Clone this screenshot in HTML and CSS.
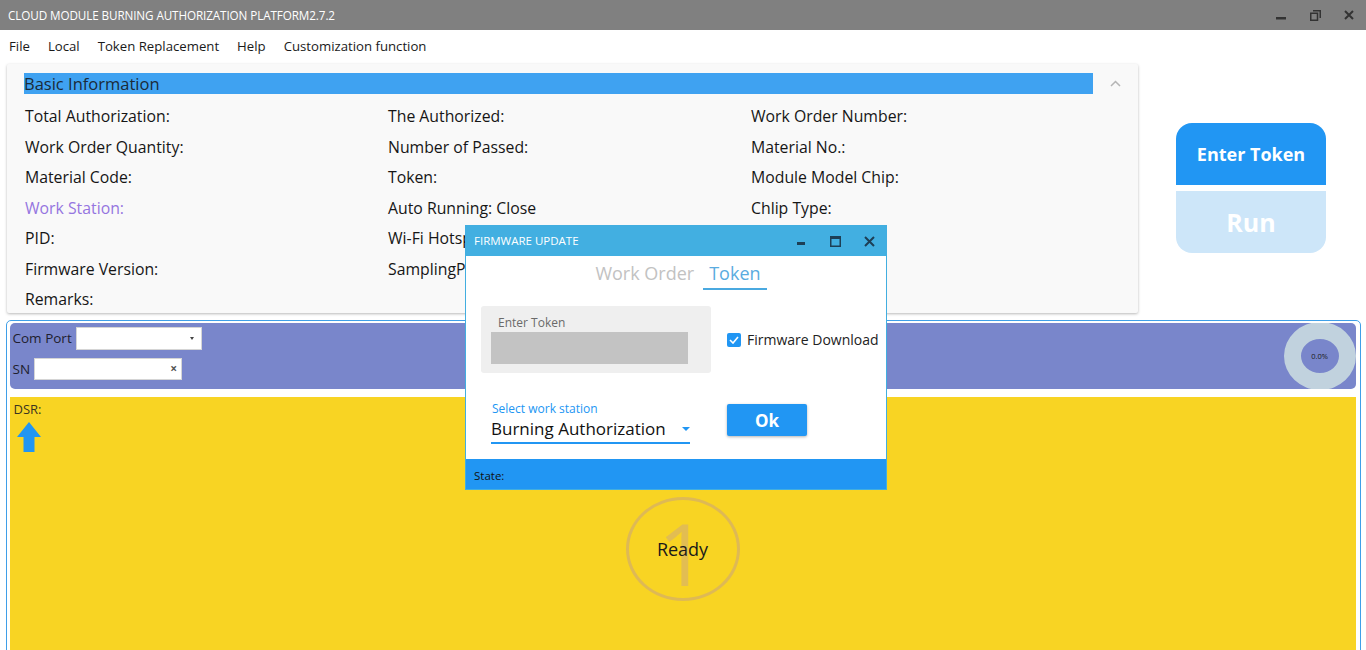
FILE: index.html
```html
<!DOCTYPE html>
<html lang="en">
<head>
<meta charset="utf-8">
<title>CLOUD MODULE BURNING AUTHORIZATION PLATFORM2.7.2</title>
<link rel="stylesheet" href="styles.css">
</head>
<body>
<header class="titlebar">
  <span class="app-title">CLOUD MODULE BURNING AUTHORIZATION PLATFORM2.7.2</span>
  <div class="win-btns">
    <span class="win-btn"><svg width="10" height="10" viewBox="0 0 10 10"><rect x="0" y="7" width="10" height="2.5" fill="#333"/></svg></span>
    <span class="win-btn"><svg width="11" height="11" viewBox="0 0 11 11"><path d="M3 .75h7.25V8M.75 3.25h6.75v7H.75z" fill="none" stroke="#333" stroke-width="1.5"/></svg></span>
    <span class="win-btn"><svg width="10" height="10" viewBox="0 0 10 10"><path d="M1 1l8 8M9 1L1 9" stroke="#333" stroke-width="2"/></svg></span>
  </div>
</header>
<nav class="menubar">
  <span class="menu-item">File</span>
  <span class="menu-item">Local</span>
  <span class="menu-item">Token Replacement</span>
  <span class="menu-item">Help</span>
  <span class="menu-item">Customization function</span>
</nav>
<main class="main">
  <div class="top">
    <section class="info-card">
      <div class="info-head">
        <span class="info-title">Basic Information</span>
        <span class="chev"><svg width="11" height="7" viewBox="0 0 11 7"><path d="M1 6l4.5-4.5L10 6" fill="none" stroke="#b5b5b5" stroke-width="1.5"/></svg></span>
      </div>
      <div class="info-grid">
        <span>Total Authorization:</span><span>The Authorized:</span><span>Work Order Number:</span>
        <span>Work Order Quantity:</span><span>Number of Passed:</span><span>Material No.:</span>
        <span>Material Code:</span><span>Token:</span><span>Module Model Chip:</span>
        <span class="accent">Work Station:</span><span>Auto Running: Close</span><span>Chlip Type:</span>
        <span>PID:</span><span>Wi-Fi Hotspot:</span><span></span>
        <span>Firmware Version:</span><span>SamplingPoint:</span><span></span>
        <span>Remarks:</span><span></span><span></span>
      </div>
    </section>
    <div class="actions">
      <button class="btn-token">Enter Token</button>
      <button class="btn-run">Run</button>
    </div>
  </div>
  <section class="station">
    <div class="port-bar">
      <div class="port-fields">
        <div class="field-row">
          <label class="field-label">Com Port</label>
          <div class="select-box"><span class="caret"></span></div>
        </div>
        <div class="field-row">
          <label class="field-label">SN</label>
          <div class="sn-box"><span class="clear">×</span></div>
        </div>
      </div>
      <div class="ring"><span class="ring-text">0.0%</span></div>
    </div>
    <div class="work-area">
      <div class="dsr">
        <span class="dsr-label">DSR:</span>
        <svg class="arrow" width="24" height="30" viewBox="0 0 24 30"><polygon points="12,0 24,15 17.5,15 17.5,30 6.5,30 6.5,15 0,15" fill="#2196f3"/></svg>
      </div>
      <div class="ready-circle">
        <span class="ready-num">1</span>
        <span class="ready-text">Ready</span>
      </div>
    </div>
  </section>
</main>

<div class="modal">
  <div class="modal-title">
    <span class="modal-name">FIRMWARE UPDATE</span>
    <div class="modal-btns">
      <span class="win-btn"><svg width="8" height="8" viewBox="0 0 8 8"><rect x="0" y="5" width="8" height="3" fill="#1d3f56"/></svg></span>
      <span class="win-btn"><svg width="11" height="11" viewBox="0 0 11 11"><path d="M.75 .75h9.5v9.5H.75z" fill="none" stroke="#1d3f56" stroke-width="1.5"/><rect x="0" y="0" width="11" height="3" fill="#1d3f56"/></svg></span>
      <span class="win-btn"><svg width="11" height="11" viewBox="0 0 11 11"><path d="M1 1l9 9M10 1L1 10" stroke="#1d3f56" stroke-width="2"/></svg></span>
    </div>
  </div>
  <div class="modal-body">
    <div class="tabs">
      <span class="tab">Work Order</span>
      <span class="tab tab-active">Token</span>
    </div>
    <div class="token-row">
      <div class="token-box">
        <span class="token-label">Enter Token</span>
        <div class="token-input"></div>
      </div>
      <label class="check">
        <span class="check-box"><svg width="10" height="8" viewBox="0 0 10 8"><path d="M1 4l3 3 5-6" fill="none" stroke="#fff" stroke-width="1.6"/></svg></span>
        <span class="check-text">Firmware Download</span>
      </label>
    </div>
    <div class="station-row">
      <div class="ws-select">
        <span class="ws-label">Select work station</span>
        <div class="ws-value"><span>Burning Authorization</span><span class="ws-caret"></span></div>
      </div>
      <button class="btn-ok">Ok</button>
    </div>
  </div>
  <div class="modal-state">State:</div>
</div>
</body>
</html>
```

FILE: styles.css
```css
html, body {
  margin: 0;
  padding: 0;
  height: 650px;
  overflow: hidden;
  background: #ffffff;
  font-family: "Open Sans", "Noto Sans", "Liberation Sans", sans-serif;
  color: #1a1a1a;
}

.titlebar {
  height: 30px;
  background: #808080;
  display: flex;
  align-items: center;
  justify-content: space-between;
}
.app-title {
  color: #ffffff;
  font-size: 11.7px;
  padding-left: 8px;
  letter-spacing: -0.1px;
}
.win-btns, .modal-btns {
  display: flex;
  height: 100%;
}
.win-btn {
  width: 34px;
  display: flex;
  align-items: center;
  justify-content: center;
}

.menubar {
  height: 32px;
  display: flex;
  align-items: center;
  font-size: 13.2px;
  padding-left: 0;
}
.menu-item {
  padding: 0 9px;
}

.main {
  display: flex;
  flex-direction: column;
}
.top {
  display: flex;
  margin-top: 2px;
}
.info-card {
  margin-left: 7px;
  width: 1131px;
  height: 249px;
  box-sizing: border-box;
  background: #f9f9f9;
  box-shadow: 0 1px 3px rgba(0,0,0,0.28);
  border-radius: 2px;
  padding: 9px 0 0 17px;
}
.info-head {
  display: flex;
  height: 21px;
}
.info-title {
  flex: 1;
  background: #3fa2f1;
  font-size: 16.5px;
  line-height: 21px;
  color: #1b2a38;
}
.chev {
  width: 45px;
  display: flex;
  align-items: center;
  justify-content: center;
}
.info-grid {
  margin-top: 7px;
  display: grid;
  grid-template-columns: 363px 363px 1fr;
  grid-auto-rows: 30.5px;
  font-size: 15.8px;
  align-items: center;
  padding-left: 1px;
  color: #161616;
}
.accent {
  color: #9575e0;
}

.actions {
  margin-left: 38px;
  padding-top: 59px;
  display: flex;
  flex-direction: column;
  gap: 6px;
}
.btn-token, .btn-run {
  width: 150px;
  height: 62px;
  border: none;
  color: #ffffff;
  font-family: inherit;
  font-weight: 700;
  padding: 0;
}
.btn-token {
  background: #2196f3;
  border-radius: 16px 16px 0 0;
  font-size: 18px;
}
.btn-run {
  background: #cde6f9;
  border-radius: 0 0 16px 16px;
  font-size: 25px;
}

.station {
  margin-top: 7px;
  margin-left: 6px;
  width: 1355px;
  box-sizing: border-box;
  border: 1.5px solid #3f9fe8;
  border-radius: 5px;
  padding: 1.5px 4.5px 0 2.5px;
}
.port-bar {
  height: 66px;
  background: #7986cb;
  border-radius: 5px;
  display: flex;
  justify-content: space-between;
  align-items: center;
  overflow: hidden;
}
.port-fields {
  display: flex;
  flex-direction: column;
  gap: 8px;
  padding-left: 3px;
  align-self: flex-start;
  padding-top: 4px;
}
.field-row {
  display: flex;
  align-items: center;
  gap: 4px;
  font-size: 13.5px;
  color: #1e1e2e;
}
.select-box {
  width: 126px;
  height: 23px;
  box-sizing: border-box;
  background: #ffffff;
  border: 1px solid #d5d5d5;
  display: flex;
  align-items: center;
  justify-content: flex-end;
  padding-right: 7px;
}
.caret {
  width: 0;
  height: 0;
  border-left: 2.5px solid transparent;
  border-right: 2.5px solid transparent;
  border-top: 3px solid #444;
}
.sn-box {
  width: 148px;
  height: 22px;
  box-sizing: border-box;
  background: #ffffff;
  border: 1px solid #d5d5d5;
  display: flex;
  align-items: center;
  justify-content: flex-end;
  padding-right: 4px;
}
.clear {
  font-size: 12px;
  color: #555;
  font-weight: 700;
}
.ring {
  width: 72px;
  height: 68px;
  box-sizing: border-box;
  border-radius: 50%;
  border: 17px solid #c1d2de;
  background: #7986cb;
  display: flex;
  align-items: center;
  justify-content: center;
}
.ring-text {
  font-size: 7.5px;
  color: #1a1a1a;
}

.work-area {
  margin-top: 8px;
  height: 304px;
  background: #f8d423;
  display: grid;
}
.dsr, .ready-circle {
  grid-area: 1 / 1;
}
.dsr {
  align-self: start;
  justify-self: start;
  display: flex;
  flex-direction: column;
  padding: 3px 0 0 4px;
}
.dsr-label {
  font-size: 13px;
  color: #3a3420;
  line-height: 18px;
}
.arrow {
  margin-top: 4px;
  margin-left: 3px;
}
.ready-circle {
  place-self: center;
  width: 114px;
  height: 104px;
  box-sizing: border-box;
  border: 3px solid #deb955;
  border-radius: 50%;
  display: grid;
  place-items: center;
}
.ready-num, .ready-text {
  grid-area: 1 / 1;
}
.ready-num {
  font-size: 86px;
  color: #e2bd52;
  line-height: 1;
  margin-top: 8px;
}
.ready-text {
  font-size: 18px;
  color: #1a1a1a;
}

/* Modal dialog overlay */
.modal {
  position: absolute;
  left: 465px;
  top: 225px;
  width: 422px;
  height: 265px;
  box-sizing: border-box;
  border: 1px solid #42aee0;
  background: #ffffff;
  display: flex;
  flex-direction: column;
}
.modal-title {
  height: 30px;
  background: #42afe1;
  display: flex;
  align-items: center;
  justify-content: space-between;
}
.modal-name {
  color: #ffffff;
  font-size: 11.5px;
  padding-left: 8px;
  padding-bottom: 2px;
}
.modal-body {
  flex: 1;
  display: flex;
  flex-direction: column;
}
.tabs {
  display: flex;
  justify-content: center;
  gap: 3px;
  padding-left: 4px;
  margin-top: 4px;
}
.tab {
  font-size: 18px;
  color: #c2c2c2;
  padding: 0 6px 2px;
  line-height: 26px;
  border-bottom: 2px solid transparent;
}
.tab-active {
  color: #5aace0;
  border-bottom-color: #4aa9e0;
}
.token-row {
  display: flex;
  align-items: center;
  margin-top: 16px;
  padding-left: 15px;
}
.token-box {
  width: 230px;
  height: 67px;
  box-sizing: border-box;
  background: #efefef;
  border-radius: 3px;
  padding: 8px 0 0 10px;
  display: flex;
  flex-direction: column;
}
.token-label {
  font-size: 12px;
  color: #6a6a6a;
  padding-left: 7px;
  line-height: 17px;
}
.token-input {
  width: 197px;
  height: 32px;
  background: #c3c3c3;
  margin-top: 1px;
}
.check {
  display: flex;
  align-items: center;
  margin-left: 16px;
  gap: 6px;
}
.check-box {
  width: 14px;
  height: 14px;
  border-radius: 2px;
  background: #2196f3;
  display: flex;
  align-items: center;
  justify-content: center;
}
.check-text {
  font-size: 14px;
  color: #222;
}
.station-row {
  display: flex;
  align-items: flex-start;
  margin-top: 28px;
  padding-left: 25px;
}
.ws-select {
  width: 199px;
  display: flex;
  flex-direction: column;
  border-bottom: 2px solid #2196f3;
}
.ws-label {
  font-size: 12px;
  color: #2196f3;
  line-height: 16px;
  padding-left: 1px;
}
.ws-value {
  display: flex;
  align-items: center;
  justify-content: space-between;
  font-size: 17px;
  color: #111;
  line-height: 24px;
  padding-bottom: 1px;
}
.ws-caret {
  width: 0;
  height: 0;
  border-left: 4px solid transparent;
  border-right: 4px solid transparent;
  border-top: 4px solid #2196f3;
}
.btn-ok {
  margin-left: 37px;
  margin-top: 3px;
  width: 80px;
  height: 32px;
  border: none;
  border-radius: 2px;
  background: #2196f3;
  color: #ffffff;
  font-family: inherit;
  font-weight: 700;
  font-size: 17px;
  box-shadow: 0 1px 3px rgba(0,0,0,0.3);
  padding: 0;
}
.modal-state {
  height: 30px;
  background: #2196f3;
  font-size: 11.5px;
  color: #111;
  display: flex;
  align-items: center;
  padding-left: 8px;
  padding-top: 2px;
  box-sizing: border-box;
}
```
